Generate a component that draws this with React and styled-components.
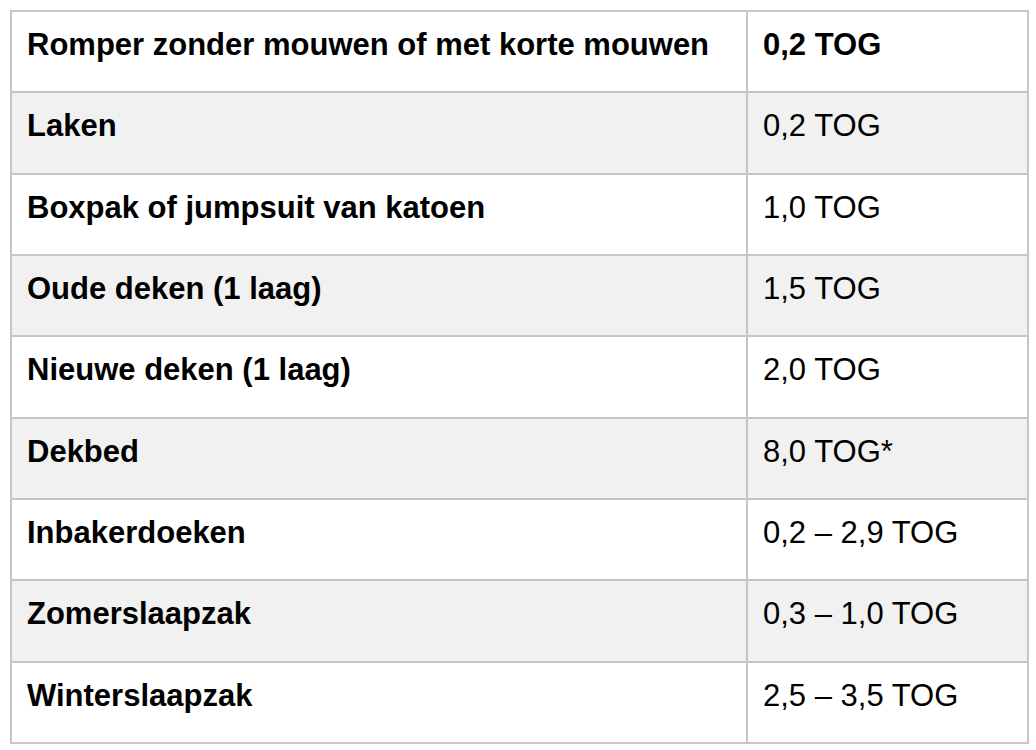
import { createGlobalStyle, styled } from 'styled-components';

const GlobalStyle = createGlobalStyle`
    body {
        margin: 0;
        background: #ffffff;
        font-family: "Liberation Sans", Arial, Helvetica, sans-serif;
        color: #000000;
    }
`;

const Wrapper = styled.div`
    padding: 10px;
`;

const Table = styled.table`
    border-collapse: collapse;
    width: 1019px;
    table-layout: fixed;
`;

const Row = styled.tr`
    background-color: ${({ $shaded }) => ($shaded ? '#f1f1f1' : '#ffffff')};
`;

const Cell = styled.td`
    border: 2px solid #c6c6c6;
    height: 81.33px;
    padding: 10px 15px 0 15px;
    vertical-align: top;
    font-size: 31px;
    line-height: 46px;
    font-weight: ${({ $bold }) => ($bold ? 700 : 400)};
    box-sizing: border-box;
    white-space: nowrap;
`;

const rows = [
    ['Romper zonder mouwen of met korte mouwen', '0,2 TOG'],
    ['Laken', '0,2 TOG'],
    ['Boxpak of jumpsuit van katoen', '1,0 TOG'],
    ['Oude deken (1 laag)', '1,5 TOG'],
    ['Nieuwe deken (1 laag)', '2,0 TOG'],
    ['Dekbed', '8,0 TOG*'],
    ['Inbakerdoeken', '0,2 – 2,9 TOG'],
    ['Zomerslaapzak', '0,3 – 1,0 TOG'],
    ['Winterslaapzak', '2,5 – 3,5 TOG'],
];

export default function App() {
    return (
        <>
            <GlobalStyle />
            <Wrapper>
                <Table>
                    <colgroup>
                        <col style={{ width: '736px' }} />
                        <col />
                    </colgroup>
                    <tbody>
                        {rows.map(([item, tog], index) => (
                            <Row key={item} $shaded={index % 2 === 1}>
                                <Cell $bold>{item}</Cell>
                                <Cell $bold={index === 0}>{tog}</Cell>
                            </Row>
                        ))}
                    </tbody>
                </Table>
            </Wrapper>
        </>
    );
}
